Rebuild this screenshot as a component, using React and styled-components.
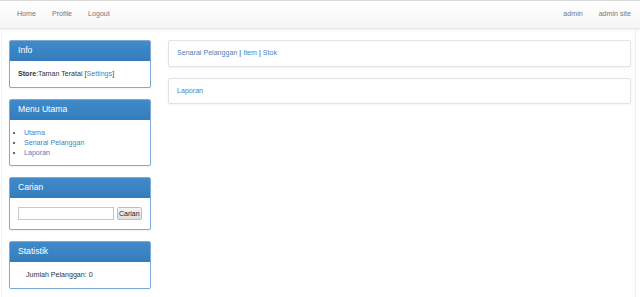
import React from "react";
import styled, { createGlobalStyle } from "styled-components";

const Global = createGlobalStyle`
  html, body { margin: 0; padding: 0; background: #fff; }
  body {
    font-family: "Liberation Sans", Arial, sans-serif;
    font-size: 7.1px;
    line-height: 1.42;
    color: #333;
  }
  a { color: #4a7fc0; text-decoration: none; }
`;

const Navbar = styled.nav`
  height: 27px;
  border-top: 1px solid #d9d9d9;
  border-bottom: 1px solid #e7e7e7;
  background: linear-gradient(to bottom, #ffffff 0%, #f6f6f6 100%);
  box-shadow: 0 1px 3px rgba(0, 0, 0, 0.06);
  display: flex;
  justify-content: space-between;
  align-items: center;
  padding: 0 1px 0 9px;
`;

const NavGroup = styled.ul`
  list-style: none;
  margin: 0;
  padding: 0;
  display: flex;
`;

const NavLink = styled.a`
  display: block;
  padding: 0 8px;
  color: #777777;
  font-size: 7.1px;
  line-height: 27px;
`;

const Main = styled.div`
  margin: 0 4px 0 1px;
  border-left: 1px solid #f2f2f2;
  border-right: 1px solid #f0f0f0;
  padding: 11px 3px 8px 7px;
  display: grid;
  grid-template-columns: 142px 463px;
  column-gap: 17px;
  align-items: start;
`;

const Column = styled.div`
  display: flex;
  flex-direction: column;
  gap: 11px;
`;

const Panel = styled.section`
  background: #fff;
  border: 1px solid ${(p) => (p.$primary ? "#7ea8d6" : "#e3e3e3")};
  border-radius: 2px;
  box-shadow: 0 1px 2px rgba(0, 0, 0, 0.05);
  overflow: hidden;
`;

const PanelHeading = styled.h3`
  margin: -1px -1px 0 -1px;
  height: 20px;
  padding: 0 9px;
  display: flex;
  align-items: center;
  background: linear-gradient(to bottom, #428bca 0%, #357ebd 100%);
  border-bottom: 1px solid #3479b8;
  color: #fff;
  font-weight: normal;
  font-size: 8.6px;
  border-radius: 2px 2px 0 0;
`;

const PanelBody = styled.div`
  min-height: ${(p) => p.$h || 26}px;
  padding: 0 8px 0 ${(p) => p.$indent || 8}px;
  display: flex;
  align-items: center;
`;

const MenuList = styled.ul`
  margin: 0;
  padding: 8px 0 7px 6px;
  list-style: disc;
  line-height: 10px;
`;

const SearchForm = styled.form`
  display: flex;
  align-items: center;
  gap: 3px;
`;

const SearchInput = styled.input`
  box-sizing: border-box;
  width: 96px;
  height: 13px;
  border: 1px solid #c8c8c8;
  padding: 0 2px;
  margin: 0;
  font-size: 7px;
  background: #fff;
`;

const SearchButton = styled.button`
  box-sizing: border-box;
  height: 13px;
  padding: 0 1px;
  margin: 0;
  font-family: "Liberation Sans", Arial, sans-serif;
  font-size: 7px;
  color: #222;
  border: 1px solid #bdbdbd;
  border-radius: 2px;
  background: linear-gradient(to bottom, #f4f4f4, #dedede);
`;

const Strong = styled.b`
  font-weight: bold;
`;

export default function App() {
  return (
    <>
      <Global />
      <Navbar>
        <NavGroup>
          <li><NavLink href="#">Home</NavLink></li>
          <li><NavLink href="#">Profile</NavLink></li>
          <li><NavLink href="#">Logout</NavLink></li>
        </NavGroup>
        <NavGroup>
          <li><NavLink href="#">admin</NavLink></li>
          <li><NavLink href="#">admin site</NavLink></li>
        </NavGroup>
      </Navbar>
      <Main>
        <Column>
          <Panel $primary>
            <PanelHeading>Info</PanelHeading>
            <PanelBody $h={26}>
              <span>
                <Strong>Store</Strong>:Taman Teratai [<a href="#">Settings</a>]
              </span>
            </PanelBody>
          </Panel>
          <Panel $primary>
            <PanelHeading>Menu Utama</PanelHeading>
            <PanelBody $h={45}>
              <MenuList>
                <li><a href="#">Utama</a></li>
                <li><a href="#">Senarai Pelanggan</a></li>
                <li><a href="#">Laporan</a></li>
              </MenuList>
            </PanelBody>
          </Panel>
          <Panel $primary>
            <PanelHeading>Carian</PanelHeading>
            <PanelBody $h={31}>
              <SearchForm onSubmit={(e) => e.preventDefault()}>
                <SearchInput type="text" />
                <SearchButton type="submit">Carian</SearchButton>
              </SearchForm>
            </PanelBody>
          </Panel>
          <Panel $primary>
            <PanelHeading>Statistik</PanelHeading>
            <PanelBody $h={26} $indent={16}>
              Jumlah Pelanggan: 0
            </PanelBody>
          </Panel>
        </Column>
        <Column>
          <Panel>
            <PanelBody $h={25}>
              <span>
                <a href="#">Senarai Pelanggan</a> | <a href="#">Item</a> | <a href="#">Stok</a>
              </span>
            </PanelBody>
          </Panel>
          <Panel>
            <PanelBody $h={24}>
              <a href="#">Laporan</a>
            </PanelBody>
          </Panel>
        </Column>
      </Main>
    </>
  );
}
